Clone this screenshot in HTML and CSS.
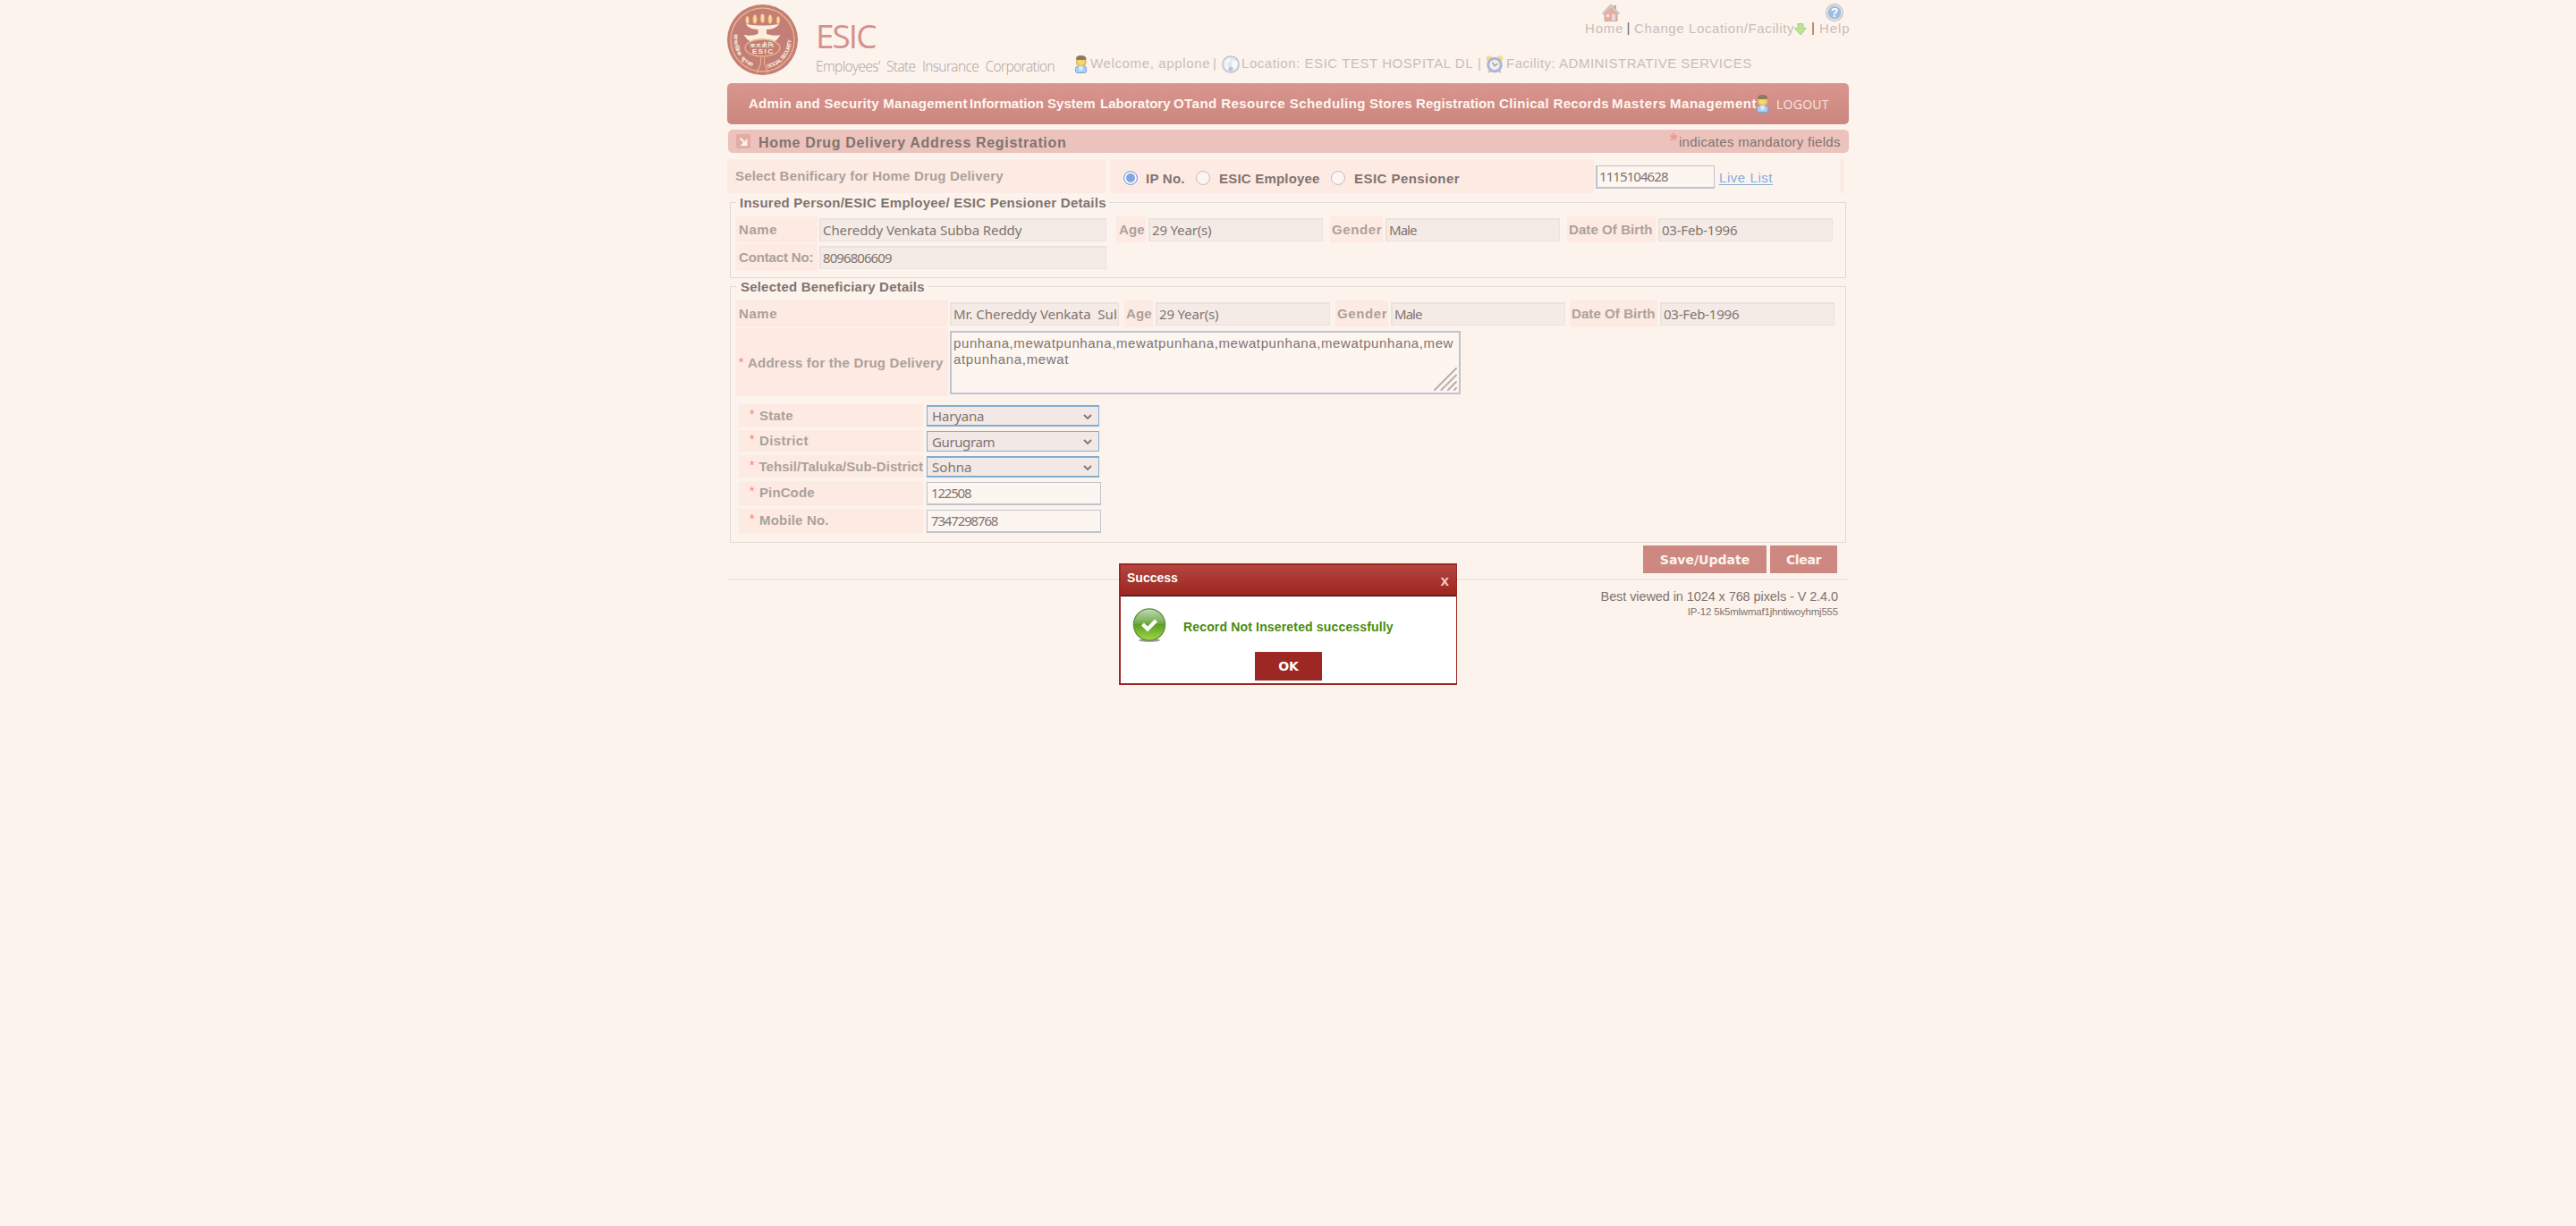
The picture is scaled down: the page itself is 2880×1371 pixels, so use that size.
FILE: index.html
```html
<!DOCTYPE html>
<html lang="en">
<head>
<meta charset="utf-8">
<title>ESIC - Home Drug Delivery Address Registration</title>
<link rel="stylesheet" href="styles.css">
</head>
<body>
<svg width="0" height="0" class="defs" aria-hidden="true">
  <symbol id="user" viewBox="0 0 13 20">
    <rect x="0.5" y="12.5" width="12" height="7" rx="2" fill="#a9d0f3" stroke="#77a7dc"/>
    <path d="M4 12h5l-1 5H5z" fill="#dcebf5"/>
    <rect x="1" y="1" width="11.5" height="11" rx="4" fill="#e0b665"/>
    <path d="M2.5 5h8v4q-4 4-8 0z" fill="#f6d76f"/>
    <path d="M1 4Q1 0 6.500 0T12.500 4L11 5H2z" fill="#8b7a5c"/>
  </symbol>
</svg>
<div class="page">
  <header class="head">
    <svg class="logo" viewBox="0 0 79 79">
      <circle cx="39.500" cy="39.500" r="39.500" fill="#c27e77"/>
      <circle cx="39.500" cy="39.500" r="35.500" fill="none" stroke="#eeb283" stroke-width="1.400"/>
      <g fill="#f9d9a0" stroke="#e39a5f" stroke-width=".8">
        <ellipse cx="22.500" cy="17.500" rx="2" ry="4.500"/><ellipse cx="31" cy="16.500" rx="2.200" ry="5"/><ellipse cx="39.500" cy="15.500" rx="2.300" ry="5"/><ellipse cx="48" cy="16.500" rx="2.200" ry="5"/><ellipse cx="57" cy="17.500" rx="2" ry="4.500"/>
      </g>
      <path d="M21 22q18.500 3 37 0q-3 5.500-14 6v5q9 3 15.500 1-3 5-8 9-12-6-24 0-6-4-9-9 8 2 16-1v-5q-11-.5-13.500-6z" fill="#fbeedd"/>
      <ellipse cx="39.500" cy="48.500" rx="19.500" ry="9.500" fill="#c27e77" stroke="#eeb283" stroke-width="1.400"/>
      <text x="39.500" y="47.500" class="logo-hi">क.रा.बी.नि.</text>
      <text x="39.500" y="54.500" class="logo-en" textLength="23">ESIC</text>
      <path d="M37.500 59v7L33 77M41.500 59v7L46 77" fill="none" stroke="#eeb283" stroke-width="1.200"/>
      <path id="arcL" d="M8 33A32 32 0 0 0 34 71" fill="none"/>
      <path id="arcR" d="M45 71A32 32 0 0 0 71 33" fill="none"/>
      <text class="logo-arc"><textPath href="#arcL" textLength="45">सामाजिक सुरक्षा</textPath></text>
      <text class="logo-arc"><textPath href="#arcR" textLength="45">SOCIAL SECURITY</textPath></text>
    </svg>
    <div class="brand">
      <div class="brand-name"><span class="t-esic">ESIC</span></div>
      <div class="brand-sub"><span class="t-corp">Employees’ State Insurance Corporation</span></div>
    </div>
    <div class="head-right">
      <nav class="links">
        <a class="link link-home"><svg class="ic20" viewBox="0 0 20 20"><path d="M3 9v10.500h14V9L10 4z" fill="#efab9b" stroke="#bdaea9"/><path d="M13 2h3v5h-3z" fill="#d6a9a0"/><path d="M0.500 11L9 1.500h2L19.500 11l-2 1L10 4.500 2.500 12z" fill="#d3cdca" stroke="#b5adaa" stroke-width=".7"/><path d="M11 12h4v7h-4z" fill="#ead9d2"/><path d="M5 12h3v3H5z" fill="#fbe9e0"/></svg><span class="t-home">Home</span></a>
        <i class="bar">|</i>
        <a class="link link-change"><span class="t-change">Change Location/Facility</span></a><svg class="ic-down" viewBox="0 0 14 14"><path d="M4 .5h6v5h3.500L7 13 .5 5.500H4z" fill="#bfe28f" stroke="#a5cf80"/></svg>
        <i class="bar bar2">|</i>
        <a class="link link-help"><svg class="ic20" viewBox="0 0 20 20"><circle cx="10" cy="10" r="9.300" fill="#e6e6e8" stroke="#bfc0c4" stroke-width="1.200"/><circle cx="10" cy="10" r="7.300" fill="#9dbde0"/><text x="10" y="14.800" class="q">?</text></svg><span class="t-help">Help</span></a>
      </nav>
      <div class="session">
        <svg class="ic-user" viewBox="0 0 13 20"><use href="#user"/></svg>
        <span class="t-welcome">Welcome, applone</span><i class="sep">|</i>
        <svg class="ic-globe" viewBox="0 0 20 20"><circle cx="10" cy="10" r="9.200" fill="#e3e6ec" stroke="#b9bfca" stroke-width="1.300"/><path d="M4 5q4-3 6-1l-2 4-3 1 3 4-2 3Q2 12 4 5zM12 5l5 2v6l-4 3-2-5z" fill="#f9f8f6"/><path d="M9 12l4 2-2 4-4-1z" fill="#b3c8e4"/></svg>
        <span class="t-location">Location: ESIC TEST HOSPITAL DL</span><i class="sep sep2">|</i>
        <svg class="ic-clock" viewBox="0 0 20 20"><circle cx="4" cy="3.500" r="3.300" fill="#f8d98c"/><circle cx="16" cy="3.500" r="3.300" fill="#f8d98c"/><path d="M3 19l3-3M17 19l-3-3" stroke="#c9bcae" stroke-width="2"/><circle cx="10" cy="10.500" r="7.300" fill="#f3eeea" stroke="#a9b6d8" stroke-width="3"/><path d="M7.500 8l2.500 3.500L14 9" fill="none" stroke="#a39c9c" stroke-width="1.300"/></svg>
        <span class="t-facility">Facility: ADMINISTRATIVE SERVICES</span>
      </div>
    </div>
  </header>

  <nav class="menu">
    <a class="m1 t-m1">Admin and Security Management</a>
    <a class="m2 t-m2">Information System</a>
    <a class="m3 t-m3">Laboratory</a>
    <a class="m4 t-m4">OTand Resource Scheduling</a>
    <a class="m5 t-m5">Stores</a>
    <a class="m6 t-m6">Registration</a>
    <a class="m7 t-m7">Clinical Records</a>
    <a class="m8 t-m8">Masters</a>
    <a class="m9 t-m9">Management</a>
    <svg class="ic-user" viewBox="0 0 13 20"><use href="#user"/></svg>
    <a class="logout t-logout">LOGOUT</a>
  </nav>

  <div class="title">
    <svg class="title-ic" viewBox="0 0 16 16"><rect width="16" height="16" rx="2" fill="#e2aca6"/><path d="M4.500 4.500l6 6" stroke="#fdf3ed" stroke-width="2.200"/><path d="M12.500 5v8H4.500z" fill="#fdf3ed"/></svg>
    <h1 class="t-title">Home Drug Delivery Address Registration</h1>
    <span class="mandatory"><b class="star-big">*</b><span class="t-mand">indicates mandatory fields</span></span>
  </div>

  <section class="picker">
    <div class="picker-label"><span class="t-select">Select Benificary for Home Drug Delivery</span></div>
    <div class="picker-opts">
      <i class="radio on"></i><label class="t-ip">IP No.</label>
      <i class="radio"></i><label class="t-emp">ESIC Employee</label>
      <i class="radio"></i><label class="t-pen">ESIC Pensioner</label>
    </div>
    <input class="field edit t-digits" value="1115104628">
    <a class="live t-live">Live List</a>
    <div class="picker-end"></div>
  </section>

  <fieldset class="box insured">
    <legend><span class="t-leg1">Insured Person/ESIC Employee/ ESIC Pensioner Details</span></legend>
    <div class="row row-a">
      <div class="lab lab3"><span class="t-name">Name</span></div><input class="field w321 t-v1" value="Chereddy Venkata Subba Reddy" readonly>
      <div class="lab lab3"><span class="t-age">Age</span></div><input class="field w195 t-v2" value="29 Year(s)" readonly>
      <div class="lab lab2"><span class="t-gender">Gender</span></div><input class="field w195 t-v3" value="Male" readonly>
      <div class="lab lab2"><span class="t-dob">Date Of Birth</span></div><input class="field w195 t-v4" value="03-Feb-1996" readonly>
    </div>
    <div class="row row-a">
      <div class="lab lab3"><span class="t-contact">Contact No:</span></div><input class="field w321 t-digits" value="8096806609" readonly>
    </div>
  </fieldset>

  <fieldset class="box beneficiary">
    <legend><span class="t-leg2">Selected Beneficiary Details</span></legend>
    <div class="row row-b">
      <div class="lab lab3"><span class="t-name">Name</span></div><input class="field w189" value="Mr. Chereddy Venkata  Subba Reddy" readonly>
      <div class="lab lab2"><span class="t-age">Age</span></div><input class="field w195 t-v2" value="29 Year(s)" readonly>
      <div class="lab lab2"><span class="t-gender">Gender</span></div><input class="field w195 t-v3" value="Male" readonly>
      <div class="lab lab2"><span class="t-dob">Date Of Birth</span></div><input class="field w195 t-v4" value="03-Feb-1996" readonly>
    </div>
    <div class="address">
      <div class="lab lab3"><b class="star">*</b><span class="t-addr">Address for the Drug Delivery</span></div>
      <div class="area"><span class="t-a1">punhana,mewatpunhana,mewatpunhana,mewatpunhana,mewatpunhana,mew</span><span class="t-a2">atpunhana,mewat</span>
        <svg class="grip" viewBox="0 0 26 26"><path d="M1 25L25 1M8.500 25L25 8.500M16 25l9-9M23 25l2-2" stroke="#b9aeaa" stroke-width="2" stroke-linecap="round"/></svg>
      </div>
    </div>
    <div class="form">
      <div class="lab fl"><b class="star">*</b><span class="t-state">State</span></div><div class="select"><span class="t-s1">Haryana</span><svg viewBox="0 0 10 6"><path d="M1 1l4 4 4-4"/></svg></div>
      <div class="lab fl fl-thin"><b class="star">*</b><span class="t-district">District</span></div><div class="select thin"><span class="t-s2">Gurugram</span><svg viewBox="0 0 10 6"><path d="M1 1l4 4 4-4"/></svg></div>
      <div class="lab fl"><b class="star">*</b><span class="t-tehsil">Tehsil/Taluka/Sub-District</span></div><div class="select"><span class="t-s3">Sohna</span><svg viewBox="0 0 10 6"><path d="M1 1l4 4 4-4"/></svg></div>
      <div class="lab fl"><b class="star">*</b><span class="t-pin">PinCode</span></div><input class="field edit2 t-pinv" value="122508">
      <div class="lab fl"><b class="star">*</b><span class="t-mob">Mobile No.</span></div><input class="field edit2 t-mobv" value="7347298768">
    </div>
  </fieldset>

  <div class="actions"><button class="btn save">Save/Update</button><button class="btn clear">Clear</button></div>
  <footer class="foot">
    <p class="best"><span class="t-best">Best viewed in 1024 x 768 pixels - V 2.4.0</span></p>
    <p class="sid"><span class="t-sid">IP-12 5k5mlwmaf1jhntiwoyhmj555</span></p>
  </footer>
</div>

<div class="dialog">
  <div class="dialog-head"><span>Success</span><a class="close">x</a></div>
  <div class="dialog-msg">
    <svg class="ok-ic" viewBox="0 0 38 38"><defs><linearGradient id="g" x1="0" y1="0" x2="0" y2="1"><stop offset="0" stop-color="#c3d8bb"/><stop offset=".45" stop-color="#72ae49"/><stop offset=".5" stop-color="#5ba024"/><stop offset="1" stop-color="#a3d648"/></linearGradient></defs><ellipse cx="19" cy="36" rx="12" ry="1.700" fill="#9a9a9a"/><circle cx="19" cy="18.500" r="17.700" fill="url(#g)" stroke="#5d8f45" stroke-width="1.200"/><path d="M10 19.500l3-3 4 4 8-8 3 3-11 11z" fill="#fff"/></svg>
    <span class="t-msg">Record Not Insereted successfully</span>
  </div>
  <button class="ok">OK</button>
</div>
</body>
</html>
```
FILE: styles.css
```css
* { box-sizing: border-box; }
body { margin: 0; background: #fdf3ed; font: 15px/20px "Liberation Sans", Arial, sans-serif; color: #80746f; min-height: 1371px; }
i { font-style: normal; }
svg { display: block; flex: none; }
.defs { position: absolute; }
.page { width: 1254px; margin: 0 auto; display: flex; flex-direction: column; white-space: nowrap; }

/* header */
.head { height: 93px; display: flex; }
.logo { width: 79px; height: 79px; margin-top: 5px; }
.logo text { fill: #fbeedd; text-anchor: middle; font-family: "Liberation Sans", "Noto Sans", sans-serif; font-weight: bold; }
.logo .logo-hi { font-size: 6px; }
.logo .logo-en { font-size: 8px; }
.logo .logo-arc { font-size: 6px; text-anchor: start; }
.brand { width: 310px; padding: 20px 0 0 20px; font-family: "Open Sans", sans-serif; }
.brand-name { font-size: 37px; line-height: 40px; color: #d5918b; height: 44px; }
.brand-sub { font-size: 15.5px; font-weight: 300; color: #aaa09c; }
.head-right { flex: 1; color: #c8beb9; }
.links { display: flex; height: 62px; padding: 2px 0 0 570px; }
.link { display: flex; flex-direction: column; align-items: flex-start; height: 40px; justify-content: flex-end; flex: none; }
.link-home { width: 42px; }
.link-change { width: 179px; }
.link-help { width: 33px; }
.ic20 { width: 20px; height: 20px; margin: 0 0 -2px 19px; }
.link-help .ic20 { margin-left: 7px; }
.q { font: bold 14px "Liberation Sans"; fill: #fff; text-anchor: middle; }
.bar { padding-top: 19px; width: 13px; text-align: center; color: #6d625e; }
.bar2 { width: 14px; }
.ic-down { width: 14px; height: 14px; margin-top: 24px; }
.session { display: flex; }
.session > span, .sep { margin-top: -1px; flex: none; }
.ic-user { width: 13px; height: 20px; }
.session .t-welcome { margin-left: 4px; width: 137px; }
.session .t-location { width: 264px; }
.sep { width: 10px; }
.sep2 { width: 9px; }
.ic-globe { width: 20px; height: 20px; margin-right: 2px; }
.ic-clock { width: 20px; height: 20px; margin-right: 3px; }

/* menu */
.menu { height: 46px; border-radius: 5px; background: linear-gradient(#d9968e, #cb877f); color: #fff6f0; font-weight: bold; display: flex; align-items: flex-start; padding: 13px 0 0 24px; }
.menu a { flex: none; }
.m1 { width: 247px; }
.m2 { width: 146px; }
.m3 { width: 82px; }
.m4 { width: 219px; }
.m5 { width: 52px; }
.m6 { width: 93px; }
.m7 { width: 126px; }
.m8 { width: 65px; }
.m9 { width: 97px; }
.menu .logout { margin: 1px 0 0 9px; font: 14px/20px "Open Sans", sans-serif; color: #f9e6e0; }

/* page title */
.title { height: 26px; margin: 6px 0 0 1px; border-radius: 5px; background: #ecc3bc; display: flex; padding: 0 9px; }
.title-ic { width: 16px; height: 16px; margin-top: 5px; }
.title h1 { font-size: 16px; line-height: 20px; margin: 5px 0 0 9px; }
.mandatory { margin-left: auto; display: flex; padding-top: 4px; width: 191px; }
.star-big { color: #f0968c; font-size: 22px; width: 10px; line-height: 15px; }

/* beneficiary picker */
.picker { height: 38px; margin-top: 7px; display: flex; }
.picker-label { width: 423px; background: #fdeae3; color: #aba19b; font-weight: bold; padding: 9px 0 0 9px; }
.picker-opts { width: 541px; margin-left: 5px; background: #fdeae3; font-weight: bold; display: flex; padding: 12px 0 0 15px; }
.radio { width: 16px; height: 16px; border-radius: 50%; border: 1px solid #c4bcbf; background: #fdf5f1; margin: 1px 10px 0 0; flex: none; }
.radio.on { border: 1.5px solid #7fa5e5; background: #7fa5e5; box-shadow: inset 0 0 0 2px #fdf5f1; margin-right: 9px; }
.picker-opts label { flex: none; }
.t-ip { width: 56px; }
.t-emp { width: 125px; }
.field { display: block; height: 26px; margin: 0; padding: 0 2px 2px; border: 1px solid #ebe2de; border-top-width: 2px; border-left-width: 2px; border-radius: 0; background: #f5ebe6; color: #80746f; font: 15px "Noto Sans", sans-serif; outline: 0; }
.edit, .edit2 { background: #fdf5f0; border: 1px solid #bfc3cd; border-bottom-width: 2px; }
.edit { border-left-width: 2px; width: 133px; margin: 7px 0 0 2px; }
.live { margin: 11px 0 0 5px; width: 135px; height: 20px; color: #83acd9; text-decoration: underline; text-underline-offset: 2px; }
.picker-end { width: 5px; background: #fdeae3; }

/* fieldsets */
.box { margin: 0 3px; border: 1px solid #e2d9d4; padding: 0; min-width: 0; }
.box legend { margin: 0 0 6px 6px; padding: 1px 0 0 4px; font-weight: bold; height: 20px; line-height: 20px; }
.insured { height: 95px; }
.insured legend { width: 417px; }
.beneficiary { margin-top: -1px; height: 297px; }
.beneficiary legend { width: 215px; padding-left: 5px; }
.row { display: grid; height: 31px; margin-left: 6px; }
.row-a { grid-template-columns: 91px 334px 33px 206px 59px 206px 99px 198px; }
.row-b { grid-template-columns: 237px 197px 32px 204px 59px 203px 98px 198px; }
.lab { height: 29px; background: #fdeae3; color: #aba19b; font-weight: bold; padding-top: 5px; box-shadow: 0 1px #fdeee7; }
.lab3 { padding-left: 3px; }
.lab2 { padding-left: 2px; }
.row .field { margin: 2px 0 0 3px; }
.row .w321, .row .w189 { margin-left: 2px; }
.w321 { width: 321px; }
.w195 { width: 195px; }
.w189 { width: 189px; }
.address { display: flex; margin-left: 6px; height: 80px; }
.address .lab { width: 237px; height: 75px; padding-top: 29px; display: flex; }
.star { color: #fb7d77; font-size: 14px; font-weight: normal; width: 10px; line-height: 18px; }
.area { position: relative; width: 571px; height: 71px; margin: 3px 0 0 2px; border: 2px solid #bfc3cd; padding: 3px 2px 0; line-height: 18px; background: #fdf5f0; }
.area span { display: block; }
.grip { position: absolute; right: 2px; bottom: 2px; width: 26px; height: 26px; }
.form { display: grid; grid-template-columns: 206px 195px; column-gap: 4px; grid-template-rows: 25px 24px 25px 27px 27px; row-gap: 4px; margin: 5px 0 0 9px; }
.fl { height: auto; display: flex; padding: 3px 0 0 12px; }
.fl-thin { padding-top: 2px; }
.fl .star { width: 11px; line-height: 17px; }
.select { width: 193px; height: 24px; margin-top: 1px; border: 1px solid #83add0; border-width: 2px 1px; background: #f2e8e5; font: 15px/20px "Noto Sans", sans-serif; display: flex; justify-content: space-between; padding: 0 7px 0 5px; }
.select.thin { height: 23px; border-width: 1px; line-height: 22px; }
.select svg { width: 10px; height: 6px; margin-top: 8px; fill: none; stroke: #80746f; stroke-width: 1.8; }
.edit2 { width: 195px; margin-top: 1px; padding-left: 4px; }

/* actions and footer */
.actions { display: flex; gap: 4px; margin: 3px 0 0 1024px; }
.btn, .ok { border: 0; padding: 0; margin: 0; height: 31px; background: #cd8981; color: #fdf3ed; font: bold 14px "DejaVu Sans", sans-serif; }
.save { width: 138px; }
.clear { width: 75px; letter-spacing: -0.36px; }
.foot { margin-top: 6px; border-top: 2px solid #efe6e1; text-align: right; padding: 8px 12px 0 0; }
.foot p { margin: 0; line-height: 20px; }
.best { font-size: 14.5px; height: 17px; }
.foot .sid { font-size: 11.5px; height: 16px; line-height: 20px; }

/* message dialog */
.dialog { position: absolute; left: 1251px; top: 630px; width: 378px; height: 136px; border: 2px solid #9d2823; border-right-width: 1px; background: #fff; }
.dialog-head { height: 35px; border-bottom: 1px solid #2a0503; background: linear-gradient(#b4453e, #9c2620); color: #fff; font-weight: bold; font-size: 14px; display: flex; justify-content: space-between; padding: 4px 8px 0 7px; }
.close { margin-top: 4px; font-size: 17px; color: #f7c9c5; }
.dialog-msg { display: flex; height: 62px; padding: 13px 0 0 13px; color: #4a8c0c; font-weight: bold; font-size: 14px; }
.ok-ic { width: 38px; height: 38px; margin-right: 19px; }
.dialog-msg span { margin-top: 11px; }
.ok { display: block; width: 75px; height: 32px; margin: 0 auto; background: #9d2823; color: #fff; }

/* tracking */
.t-esic { letter-spacing: -2px; }
.t-corp { letter-spacing: -0.61px; word-spacing: 4px; }
.t-home { letter-spacing: 0.83px; }
.t-change { letter-spacing: 0.62px; }
.t-help { letter-spacing: 0.88px; }
.t-welcome { letter-spacing: 0.64px; }
.t-location { letter-spacing: 0.55px; }
.t-facility { letter-spacing: 0.49px; }
.t-m1 { letter-spacing: 0.28px; }
.t-m2 { letter-spacing: 0.03px; }
.t-m3 { letter-spacing: 0.02px; }
.t-m4 { letter-spacing: 0.44px; }
.t-m5 { letter-spacing: 0.16px; }
.t-m6 { letter-spacing: 0.09px; }
.t-m7 { letter-spacing: 0.33px; }
.t-m8 { letter-spacing: 0.63px; }
.t-m9 { letter-spacing: 0.53px; }
.t-logout { letter-spacing: 0.26px; }
.t-title { letter-spacing: 0.66px; }
.t-mand { letter-spacing: 0.28px; }
.t-select { letter-spacing: 0.18px; }
.t-ip { letter-spacing: 0.25px; }
.t-emp { letter-spacing: 0.2px; }
.t-pen { letter-spacing: 0.45px; }
.t-digits { letter-spacing: -0.92px; }
.t-live { letter-spacing: 0.56px; }
.t-leg1 { letter-spacing: 0.25px; }
.t-leg2 { letter-spacing: 0.2px; }
.t-name { letter-spacing: 0.55px; }
.t-age { letter-spacing: 0.08px; }
.t-gender { letter-spacing: 0.6px; }
.t-dob { letter-spacing: 0.08px; }
.t-contact { letter-spacing: -0.15px; }
.t-v1 { letter-spacing: -0.07px; }
.t-v2 { letter-spacing: -0.17px; }
.t-v3 { letter-spacing: -0.95px; }
.t-v4 { letter-spacing: -0.21px; }
.t-addr { letter-spacing: 0.21px; }
.t-a1 { letter-spacing: 0.6px; }
.t-a2 { letter-spacing: 0.66px; }
.t-state { letter-spacing: 0.2px; }
.t-district { letter-spacing: 0.4px; }
.t-tehsil { letter-spacing: 0.06px; }
.t-pin { letter-spacing: 0.11px; }
.t-mob { letter-spacing: 0.19px; }
.t-s1 { letter-spacing: -0.16px; }
.t-s2 { letter-spacing: -0.39px; }
.t-s3 { letter-spacing: 0.06px; }
.t-pinv { letter-spacing: -1.2px; }
.t-mobv { letter-spacing: -1.15px; }
.t-best { letter-spacing: -0.09px; }
.t-sid { letter-spacing: -0.21px; }
.t-msg { letter-spacing: 0.16px; }
```
